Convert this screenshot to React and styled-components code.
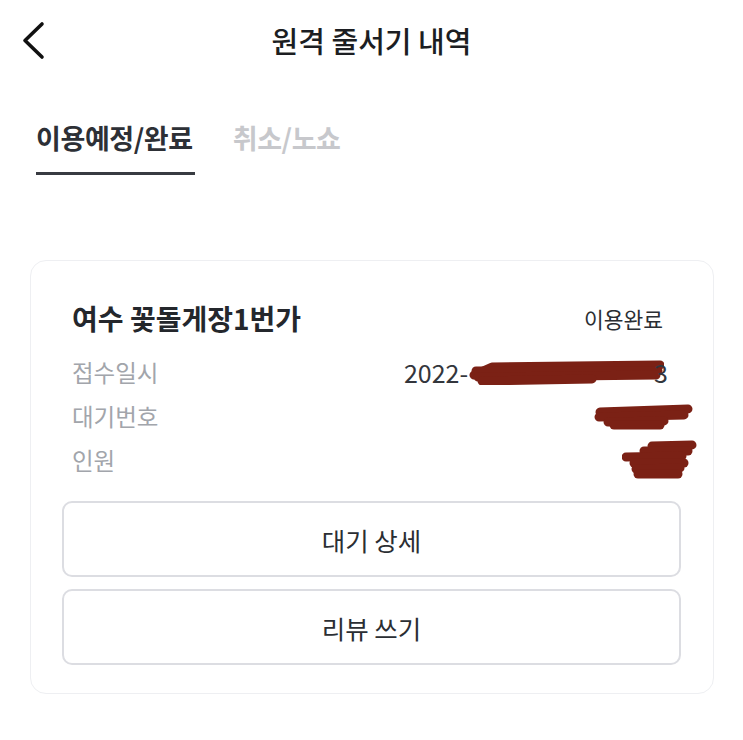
import React from "react";
import styled, { createGlobalStyle } from "styled-components";

const Global = createGlobalStyle`
  html, body { margin: 0; padding: 0; background: #ffffff; }
  body { font-family: "Noto Sans CJK KR", "Noto Sans", sans-serif; -webkit-font-smoothing: antialiased; }
  * { box-sizing: border-box; }
`;

const Page = styled.div`
  width: 743px;
  min-height: 740px;
  background: #fff;
`;

const Header = styled.header`
  height: 80px;
  display: grid;
  grid-template-columns: 80px 1fr 80px;
  align-items: center;
`;

const BackButton = styled.button`
  border: none;
  background: none;
  padding: 0 0 0 20px;
  height: 80px;
  display: flex;
  align-items: center;
  cursor: pointer;
`;

const Title = styled.h1`
  margin: 0;
  text-align: center;
  font-size: 29px;
  font-weight: 500;
  letter-spacing: 0;
  color: #1c1e22;
`;

const Tabs = styled.nav`
  display: flex;
  gap: 38px;
  padding: 40px 0 0 36px;
`;

const Tab = styled.div`
  font-size: 27px;
  font-weight: 700;
  letter-spacing: -0.4px;
  line-height: 36px;
  padding: 0 2px 16px 0;
  color: ${(p) => (p.$active ? "#2d3036" : "#c7c8cc")};
  border-bottom: 3px solid ${(p) => (p.$active ? "#383b41" : "transparent")};
`;

const Card = styled.section`
  margin: 85px 29px 0 30px;
  border: 1px solid #eeeff2;
  border-radius: 16px;
  padding: 38px 32px 28px 31px;
`;

const CardHead = styled.div`
  display: flex;
  justify-content: space-between;
  align-items: center;
  padding: 0 18px 0 10px;
  height: 38px;
  margin-bottom: 13px;
`;

const StoreName = styled.h2`
  margin: 0;
  font-size: 28px;
  font-weight: 700;
  letter-spacing: 0;
  color: #24272c;
`;

const Status = styled.span`
  font-size: 21.5px;
  letter-spacing: 0;
  color: #2b2e33;
`;

const InfoList = styled.dl`
  margin: 0 0 19px;
  padding: 0 13px 0 10px;
`;

const InfoRow = styled.div`
  display: flex;
  justify-content: space-between;
  align-items: center;
  height: 44px;
`;

const Label = styled.dt`
  font-size: 23.5px;
  letter-spacing: 0;
  color: #a2a5ab;
`;

const Value = styled.dd`
  margin: 0;
  display: flex;
  align-items: center;
  font-size: 25px;
  letter-spacing: 0;
  color: #33363c;
  margin-right: ${(p) => p.$overhang || 0}px;
`;

const Actions = styled.div`
  display: flex;
  flex-direction: column;
  gap: 12px;
`;

const ActionButton = styled.button`
  height: 76px;
  width: 100%;
  border: 2px solid #dcdde2;
  border-radius: 10px;
  background: #fff;
  font-family: inherit;
  font-size: 25.5px;
  letter-spacing: 0;
  color: #2b2e33;
  cursor: pointer;
`;

const Scribble = ({ w, h, strokes }) => (
  <svg width={w} height={h} viewBox={`0 0 ${w} ${h}`} style={{ display: "block" }}>
    {strokes.map((d, i) => (
      <path key={i} d={d} stroke="#7b2115" strokeWidth={9} strokeLinecap="round" strokeLinejoin="round" fill="none" />
    ))}
  </svg>
);

export default function App() {
  return (
    <Page>
      <Global />
      <Header>
        <BackButton aria-label="뒤로">
          <svg width="28" height="40" viewBox="0 0 28 40">
            <path d="M22 4 L5 20.5 L22 37" stroke="#111" strokeWidth="3.6" fill="none" strokeLinecap="round" strokeLinejoin="round" />
          </svg>
        </BackButton>
        <Title>원격 줄서기 내역</Title>
        <div />
      </Header>

      <Tabs>
        <Tab $active>이용예정/완료</Tab>
        <Tab>취소/노쇼</Tab>
      </Tabs>

      <Card>
        <CardHead>
          <StoreName>여수 꽃돌게장1번가</StoreName>
          <Status>이용완료</Status>
        </CardHead>
        <InfoList>
          <InfoRow>
            <Label>접수일시</Label>
            <Value>
              2022-
              <Scribble
                w={196}
                h={26}
                strokes={["M6 16 L24 8 L192 6", "M8 12 L190 12", "M10 18 L188 16", "M14 22 L124 20"]}
              />
              <span style={{ marginLeft: -10 }}>3</span>
            </Value>
          </InfoRow>
          <InfoRow>
            <Label>대기번호</Label>
            <Value $overhang={-26}>
              <Scribble
                w={100}
                h={28}
                strokes={["M6 10 L94 7", "M5 15 L90 13", "M14 20 L70 19", "M20 23 L66 23"]}
              />
            </Value>
          </InfoRow>
          <InfoRow>
            <Label>인원</Label>
            <Value $overhang={-30}>
              <Scribble
                w={76}
                h={40}
                strokes={["M30 6 L70 5", "M22 11 L66 11", "M4 17 L60 16", "M12 23 L62 23", "M14 29 L58 28", "M16 34 L56 34"]}
              />
            </Value>
          </InfoRow>
        </InfoList>
        <Actions>
          <ActionButton>대기 상세</ActionButton>
          <ActionButton>리뷰 쓰기</ActionButton>
        </Actions>
      </Card>
    </Page>
  );
}
